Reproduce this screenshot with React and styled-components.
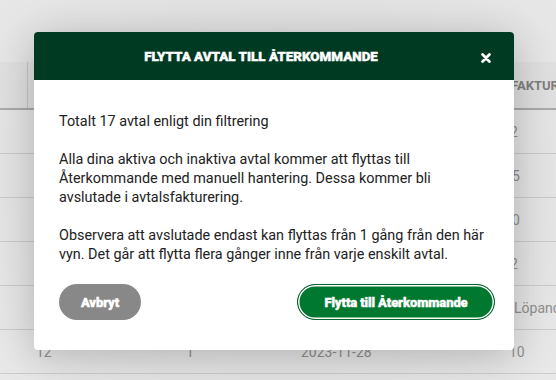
import React from "react";
import styled, { createGlobalStyle } from "styled-components";

const GlobalStyle = createGlobalStyle`
  html, body {
    margin: 0;
    padding: 0;
    width: 556px;
    height: 380px;
    overflow: hidden;
    background: #fff;
    font-family: Roboto, "Liberation Sans", sans-serif;
  }
`;

const Page = styled.div`
  position: relative;
  width: 556px;
  height: 380px;
  overflow: hidden;
  background: #fafafa;
`;

const TopBar = styled.div`
  height: 62px;
`;

const Table = styled.div`
  display: flex;
  flex-direction: column;
`;

const Row = styled.div`
  display: grid;
  grid-template-columns: 28px 150px 115px 212px 1fr;
  align-items: center;
  height: ${props => props.head ? '46px' : '43px'};
  border-bottom: ${props => props.head ? '2px solid #b8b8b8' : '1px solid #dcdcdc'};
  background: ${props => props.head ? '#f4f4f4' : 'transparent'};
`;

const Cell = styled.div`
  height: 100%;
  display: flex;
  align-items: center;
  padding-left: ${props => props.pad || '8px'};
  font-size: ${props => props.head ? '13px' : '14px'};
  font-weight: ${props => props.head ? 700 : 400};
  color: ${props => props.head ? '#8a8a8a' : '#9a9a9a'};
  border-right: ${props => props.divider ? '1px solid #d8d8d8' : 'none'};
  white-space: nowrap;
  overflow: hidden;
`;

const Overlay = styled.div`
  position: absolute;
  inset: 0;
  background: radial-gradient(ellipse at 50% 45%, rgba(0,0,0,0.13) 0%, rgba(0,0,0,0.09) 70%, rgba(0,0,0,0.07) 100%);
`;

const Modal = styled.div`
  position: absolute;
  top: 32px;
  left: 34px;
  width: 480px;
  background: #fff;
  border-radius: 4px;
  box-shadow: 0 6px 40px rgba(0, 0, 0, 0.22);
  display: flex;
  flex-direction: column;
`;

const Header = styled.div`
  height: 48px;
  background: #003a23;
  border-radius: 4px 4px 0 0;
  display: flex;
  align-items: center;
  padding: 0 14px 0 16px;
`;

const Title = styled.h2`
  flex: 1;
  margin: 0;
  text-align: center;
  color: #fff;
  font-family: Roboto, "Liberation Sans", sans-serif;
  font-weight: 900;
  font-size: 13.4px;
  -webkit-text-stroke: 0.4px #fff;
  padding-top: 1px;
`;

const Close = styled.button`
  width: 28px;
  height: 28px;
  border: none;
  background: transparent;
  padding: 0;
  display: flex;
  align-items: center;
  justify-content: center;
  cursor: pointer;
  margin-top: 3px;
`;

const Body = styled.div`
  padding: 32px 30px 0 25px;
  color: #222;
  font-size: 14.4px;
  line-height: 19px;
`;

const Paragraph = styled.p`
  margin: 0 0 19px;
  &:last-child {
    margin-bottom: 0;
  }
`;

const Footer = styled.div`
  display: flex;
  justify-content: space-between;
  align-items: center;
  padding: 20px 19px 30px 25px;
`;

const Button = styled.button`
  height: 36px;
  border-radius: 18px;
  padding: 0 ${props => props.primary ? '20px' : '17px'};
  min-width: ${props => props.primary ? '198px' : '82px'};
  font-family: Roboto, "Liberation Sans", sans-serif;
  font-weight: 900;
  font-size: 13px;
  letter-spacing: -0.1px;
  -webkit-text-stroke: 0.4px #fff;
  color: #fff;
  background: ${props => props.primary ? '#00782f' : '#888888'};
  border: ${props => props.primary ? '1px solid #00632a' : 'none'};
  box-shadow: ${props => props.primary ? 'inset 0 0 0 1.5px #ffffff' : 'none'};
  cursor: pointer;
`;

const rows = [
  { cells: ["", "", ""], last: "2", pad: "5px" },
  { cells: ["", "", ""], last: "5", pad: "7px" },
  { cells: ["", "", ""], last: "0", pad: "7px" },
  { cells: ["", "", ""], last: "2", pad: "5px" },
  { cells: ["", "", ""], last: "Löpande", pad: "9px" },
  { cells: ["12", "1", "2023-11-28"], last: "10", pad: "4px" },
];

const CloseIcon = () => (
  <svg width="10" height="10" viewBox="0 0 10 10">
    <path d="M1.6 1.6 L8.4 8.4 M8.4 1.6 L1.6 8.4" stroke="#fff" strokeWidth="2.8" strokeLinecap="round" />
  </svg>
);

export default function App() {
  return (
    <>
      <GlobalStyle />
      <Page>
        <TopBar />
        <Table>
          <Row head>
            <Cell head divider pad="0" />
            <Cell head />
            <Cell head />
            <Cell head />
            <Cell head pad="6px">FAKTURERING</Cell>
          </Row>
          {rows.map((r, i) => (
            <Row key={i}>
              <Cell />
              <Cell>{r.cells[0]}</Cell>
              <Cell>{r.cells[1]}</Cell>
              <Cell>{r.cells[2]}</Cell>
              <Cell pad={r.pad}>{r.last}</Cell>
            </Row>
          ))}
        </Table>
        <Overlay />
        <Modal role="dialog">
          <Header>
            <Title>FLYTTA AVTAL TILL ÅTERKOMMANDE</Title>
            <Close aria-label="Stäng"><CloseIcon /></Close>
          </Header>
          <Body>
            <Paragraph>Totalt 17 avtal enligt din filtrering</Paragraph>
            <Paragraph>
              Alla dina aktiva och inaktiva avtal kommer att flyttas till Återkommande med manuell hantering. Dessa kommer bli avslutade i avtalsfakturering.
            </Paragraph>
            <Paragraph>
              Observera att avslutade endast kan flyttas från 1 gång från den här vyn. Det går att flytta flera gånger inne från varje enskilt avtal.
            </Paragraph>
          </Body>
          <Footer>
            <Button>Avbryt</Button>
            <Button primary>Flytta till Återkommande</Button>
          </Footer>
        </Modal>
      </Page>
    </>
  );
}
